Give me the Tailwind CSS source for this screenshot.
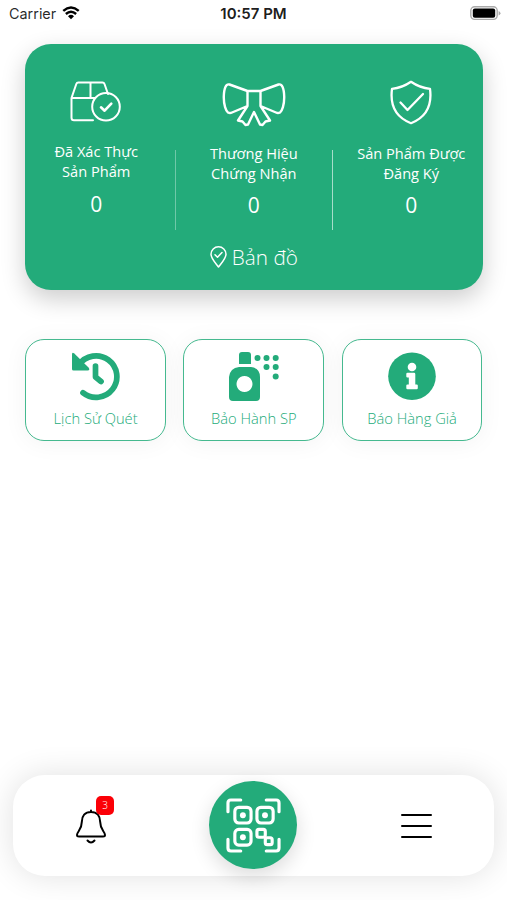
<!DOCTYPE html>
<html lang="vi">
<head>
<meta charset="utf-8">
<title>Trang chủ</title>
<script src="https://cdn.jsdelivr.net/npm/@tailwindcss/browser@4"></script>
</head>
<body class="w-[507px] h-[900px] overflow-hidden bg-white font-['Open_Sans','Noto_Sans',sans-serif] flex flex-col">
<header class="h-[43.500px] shrink-0 grid grid-cols-3 px-[9px] font-['Inter',sans-serif] text-[14.4px] leading-[28px] text-black/85">
  <div class="flex gap-[6px] items-start"><span>Carrier</span>
    <svg class="mt-[6px]" width="18" height="14" viewBox="0 0 19 15"><g fill="none" stroke="#000" stroke-width="2.6"><path d="M1.2 5.2Q9.5-2 17.8 5.2"/><path d="M4 8.6Q9.5 3.8 15 8.6"/></g><path d="M6.3 10.9Q9.5 8 12.7 10.9L9.5 14.3Z"/></svg>
  </div>
  <div class="text-center font-semibold text-[15px] text-black/90 whitespace-nowrap">10:57 PM</div>
  <div class="flex justify-end"><svg class="mt-[6px] -mr-[3px]" width="31" height="15" viewBox="0 0 31 15"><rect x=".8" y=".8" width="26.4" height="12.6" rx="3.8" fill="#fff" stroke="#aaa" stroke-width="1.4"/><rect x="2.8" y="2.5" width="22.4" height="9.2" rx="2" fill="#000"/><path d="M28.6 5v4.4Q30.5 8.5 30.5 7.2T28.6 5" fill="#aaa"/></svg></div>
</header>
<main class="pl-[25.200px] pr-[24.500px] grow">
  <section class="h-[246.500px] rounded-[26px] bg-[#23ab7a] text-white shadow-[0_9px_24px_rgba(0,0,0,0.2)]">
    <div class="grid grid-cols-[149.500px_1fr_149.500px] text-center text-[14.6px] leading-[20px] h-[195px]">
      <div class="flex flex-col items-center pt-[37px] -ml-[7.500px]">
        <svg width="52" height="43" viewBox="0 0 52 43" fill="none" stroke="#fff" stroke-width="2" stroke-linejoin="round" stroke-linecap="round"><path d="M23 39.2H4Q1.5 39.2 1.5 36.7V17L6.3 3Q6.8 1.500 8.3 1.500H32.500Q34 1.500 34.500 3L38 13M1.500 17H25M20.500 1.500V17"/><circle cx="36" cy="25.700" r="13.800"/><path stroke-width="2.600" d="m31 26.300 3.600 3.400 6.700-7"/></svg>
        <div class="mt-[17.800px]">Đã Xác Thực<br>Sản Phẩm</div>
        <div class="text-[21px] leading-[28px] mt-[8.700px]">0</div>
      </div>
      <div class="flex flex-col items-center pt-[38px] relative">
        <svg width="64" height="46" viewBox="0 0 64 46" fill="none" stroke="#fff" stroke-width="2.400" stroke-linejoin="round" stroke-linecap="round"><path d="M25.500 9 7.500 2.500C4 1.500 2 6 1.800 14.500C1.600 23 4 29 6 30.500Q8 31.500 10 30.500L25.500 24ZM38.500 9 56.500 2.500C60 1.500 62 6 62.200 14.500C62.400 23 60 29 58 30.500Q56 31.500 54 30.500L38.500 24ZM25.500 9H38.500M25.500 24 16 38.500 20.500 39.500 23.500 43 26 42.500 32 30 38 42.500 40.500 43 43.500 39.500 48 38.500 38.500 24"/></svg>
        <div class="mt-[15px]">Thương Hiệu<br>Chứng Nhận</div>
        <div class="text-[21px] leading-[28px] mt-[8.500px]">0</div>
        <i class="absolute left-0 top-[106px] w-[1.500px] h-[80px] bg-white/35"></i><i class="absolute right-0 top-[106px] w-px h-[80px] bg-white/60"></i>
      </div>
      <div class="flex flex-col items-center pt-[36px] ml-[7px]">
        <svg width="42" height="45" viewBox="0 0 42 45" fill="none" stroke="#fff" stroke-width="2.300" stroke-linejoin="round" stroke-linecap="round"><path d="M21 1.800Q30 8 40 8.800C42 24 37 37 21 43.200C5 37 0 24 2 8.800Q12 8 21 1.800Z"/><path d="m10.500 22.500 7 7.500L33 14"/></svg>
        <div class="mt-[18px] whitespace-nowrap">Sản Phẩm Được<br>Đăng Ký</div>
        <div class="text-[21px] leading-[28px] mt-[8.500px]">0</div>
      </div>
    </div>
    <div class="flex justify-center items-center gap-[5px] text-[20.700px] leading-[36px] font-light">
      <svg width="17" height="22" viewBox="0 0 17 22" fill="none" stroke="#fff" stroke-width="1.500" stroke-linecap="round" stroke-linejoin="round"><path d="M8.500 21C5.500 17 1 12.500 1 8.300a7.500 7.500 0 0 1 15 0C16 12.500 11.500 17 8.500 21Z"/><path d="m5 8.700 2.500 2.500L12 6.500"/></svg><span>Bản đồ</span>
    </div>
  </section>
  <section class="mt-[49.300px] grid grid-cols-3 gap-[17.500px] text-[14.700px] leading-[20px] font-light text-[#23ab7a] text-center">
    <div class="h-[101.500px] rounded-[19px] border-[1.500px] border-[#45b98f] bg-white shadow-[0_2px_24px_rgba(0,0,0,0.05)] flex flex-col items-center pt-[11.500px]">
      <svg width="49" height="49" viewBox="0 0 49 49"><g fill="none" stroke="#23ab7a" stroke-width="5.700" stroke-linecap="round" stroke-linejoin="round"><path d="M8 12.700A20.800 20.800 0 1 1 12 40.800M24.500 14V25L30 29.500"/></g><path d="M1 2.500Q1-.5 3.300 1.500L17.500 15.500Q19.500 18.500 16.500 18.500H2.500Q1 18.500 1 17Z" fill="#23ab7a"/></svg>
      <div class="mt-[7px]">Lịch Sử Quét</div>
    </div>
    <div class="h-[101.500px] rounded-[19px] border-[1.500px] border-[#45b98f] bg-white shadow-[0_2px_24px_rgba(0,0,0,0.05)] flex flex-col items-center pt-[11.500px]">
      <svg width="50" height="49" viewBox="0 0 50 49" fill="#23ab7a"><path d="M10 12V3Q10 0 13 0H19Q22 0 22 3V12Z"/><path fill-rule="evenodd" d="M10 15H22Q31 16 31 25V45Q31 49 27 49H4Q0 49 0 45V25Q1 16 10 15ZM15.500 24a8 8 0 1 0 .01 0Z"/><circle cx="28.500" cy="6" r="3"/><circle cx="37.500" cy="6" r="3"/><circle cx="46.700" cy="6" r="3"/><circle cx="37.500" cy="15" r="3"/><circle cx="46.700" cy="15" r="3"/><circle cx="46.700" cy="24.500" r="3"/></svg>
      <div class="mt-[7px]">Bảo Hành SP</div>
    </div>
    <div class="h-[101.500px] rounded-[19px] border-[1.500px] border-[#45b98f] bg-white shadow-[0_2px_24px_rgba(0,0,0,0.05)] flex flex-col items-center pt-[11.500px]">
      <svg width="48" height="49" viewBox="0 0 48 49"><circle cx="24" cy="24.200" r="23.800" fill="#23ab7a"/><g fill="#fff"><circle cx="24" cy="15" r="4.300"/><path d="M19.500 20.800H26Q27.300 20.800 27.300 22V32.500H28.700Q29.800 32.500 29.800 33.600V36Q29.800 37.200 28.700 37.200H19.500Q18.300 37.200 18.300 36V33.600Q18.300 32.500 19.500 32.500H20.800V25.500H19.500Q18.300 25.500 18.300 24.400V22Q18.300 20.800 19.500 20.800Z"/></g></svg>
      <div class="mt-[7px]">Báo Hàng Giả</div>
    </div>
  </section>
</main>
<nav class="mx-[13px] mb-[24.500px] h-[101px] rounded-[32px] bg-white shadow-[0_0_32px_rgba(0,0,0,0.12)] grid grid-cols-[156px_1fr_156px] items-center justify-items-center">
  <div class="relative w-[32px] h-[36px] translate-y-[2px]">
    <svg width="32" height="36" viewBox="0 0 32 36" fill="none" stroke="#000" stroke-width="2" stroke-linecap="round" stroke-linejoin="round"><path d="M16 3C10 3 6.800 7 6.800 13C6.800 21 2 22.500 2 26Q2 27.500 4 27.500H28Q30 27.500 30 26C30 22.500 25.200 21 25.200 13C25.200 7 22 3 16 3ZM16 1.500V3M12.500 31.500Q16 35.500 19.500 31.500"/></svg>
    <span class="absolute left-[21px] -top-[13px] w-[18px] h-[19px] rounded-[5px] bg-[#fb0007] text-white text-[10px] leading-[19px] text-center font-light">3</span>
  </div>
  <div class="w-[88px] h-[88px] -ml-px rounded-full bg-[#23ab7a] shadow-[0_7px_20px_rgba(0,0,0,0.14)] flex items-center justify-center">
    <svg width="55" height="55" viewBox="0 0 56 56" fill="none" stroke="#fff" stroke-width="3.200" stroke-linecap="round" stroke-linejoin="round"><path d="M2 14V5Q2 2 5 2H15M41 2H51Q54 2 54 5V14M2 42V51Q2 54 5 54H15M41 54H51Q54 54 54 51V42"/><rect x="9" y="9.500" width="16.500" height="16" rx="4"/><rect x="31.500" y="9.500" width="16.500" height="16" rx="4"/><rect x="9" y="32" width="16.500" height="16" rx="4"/><rect x="31.500" y="32" width="8.500" height="8" rx="2"/><rect x="40" y="40.500" width="7" height="7" rx="2"/><g fill="#fff" stroke="none"><circle cx="17.200" cy="17.500" r="3"/><circle cx="39.700" cy="17.500" r="3"/><circle cx="17.200" cy="40" r="3"/></g></svg>
  </div>
  <div class="w-[31px] h-[24px] translate-y-px flex flex-col justify-between"><i class="h-[2px] rounded bg-black"></i><i class="h-[2px] rounded bg-black"></i><i class="h-[2px] rounded bg-black"></i></div>
</nav>
</body>
</html>
